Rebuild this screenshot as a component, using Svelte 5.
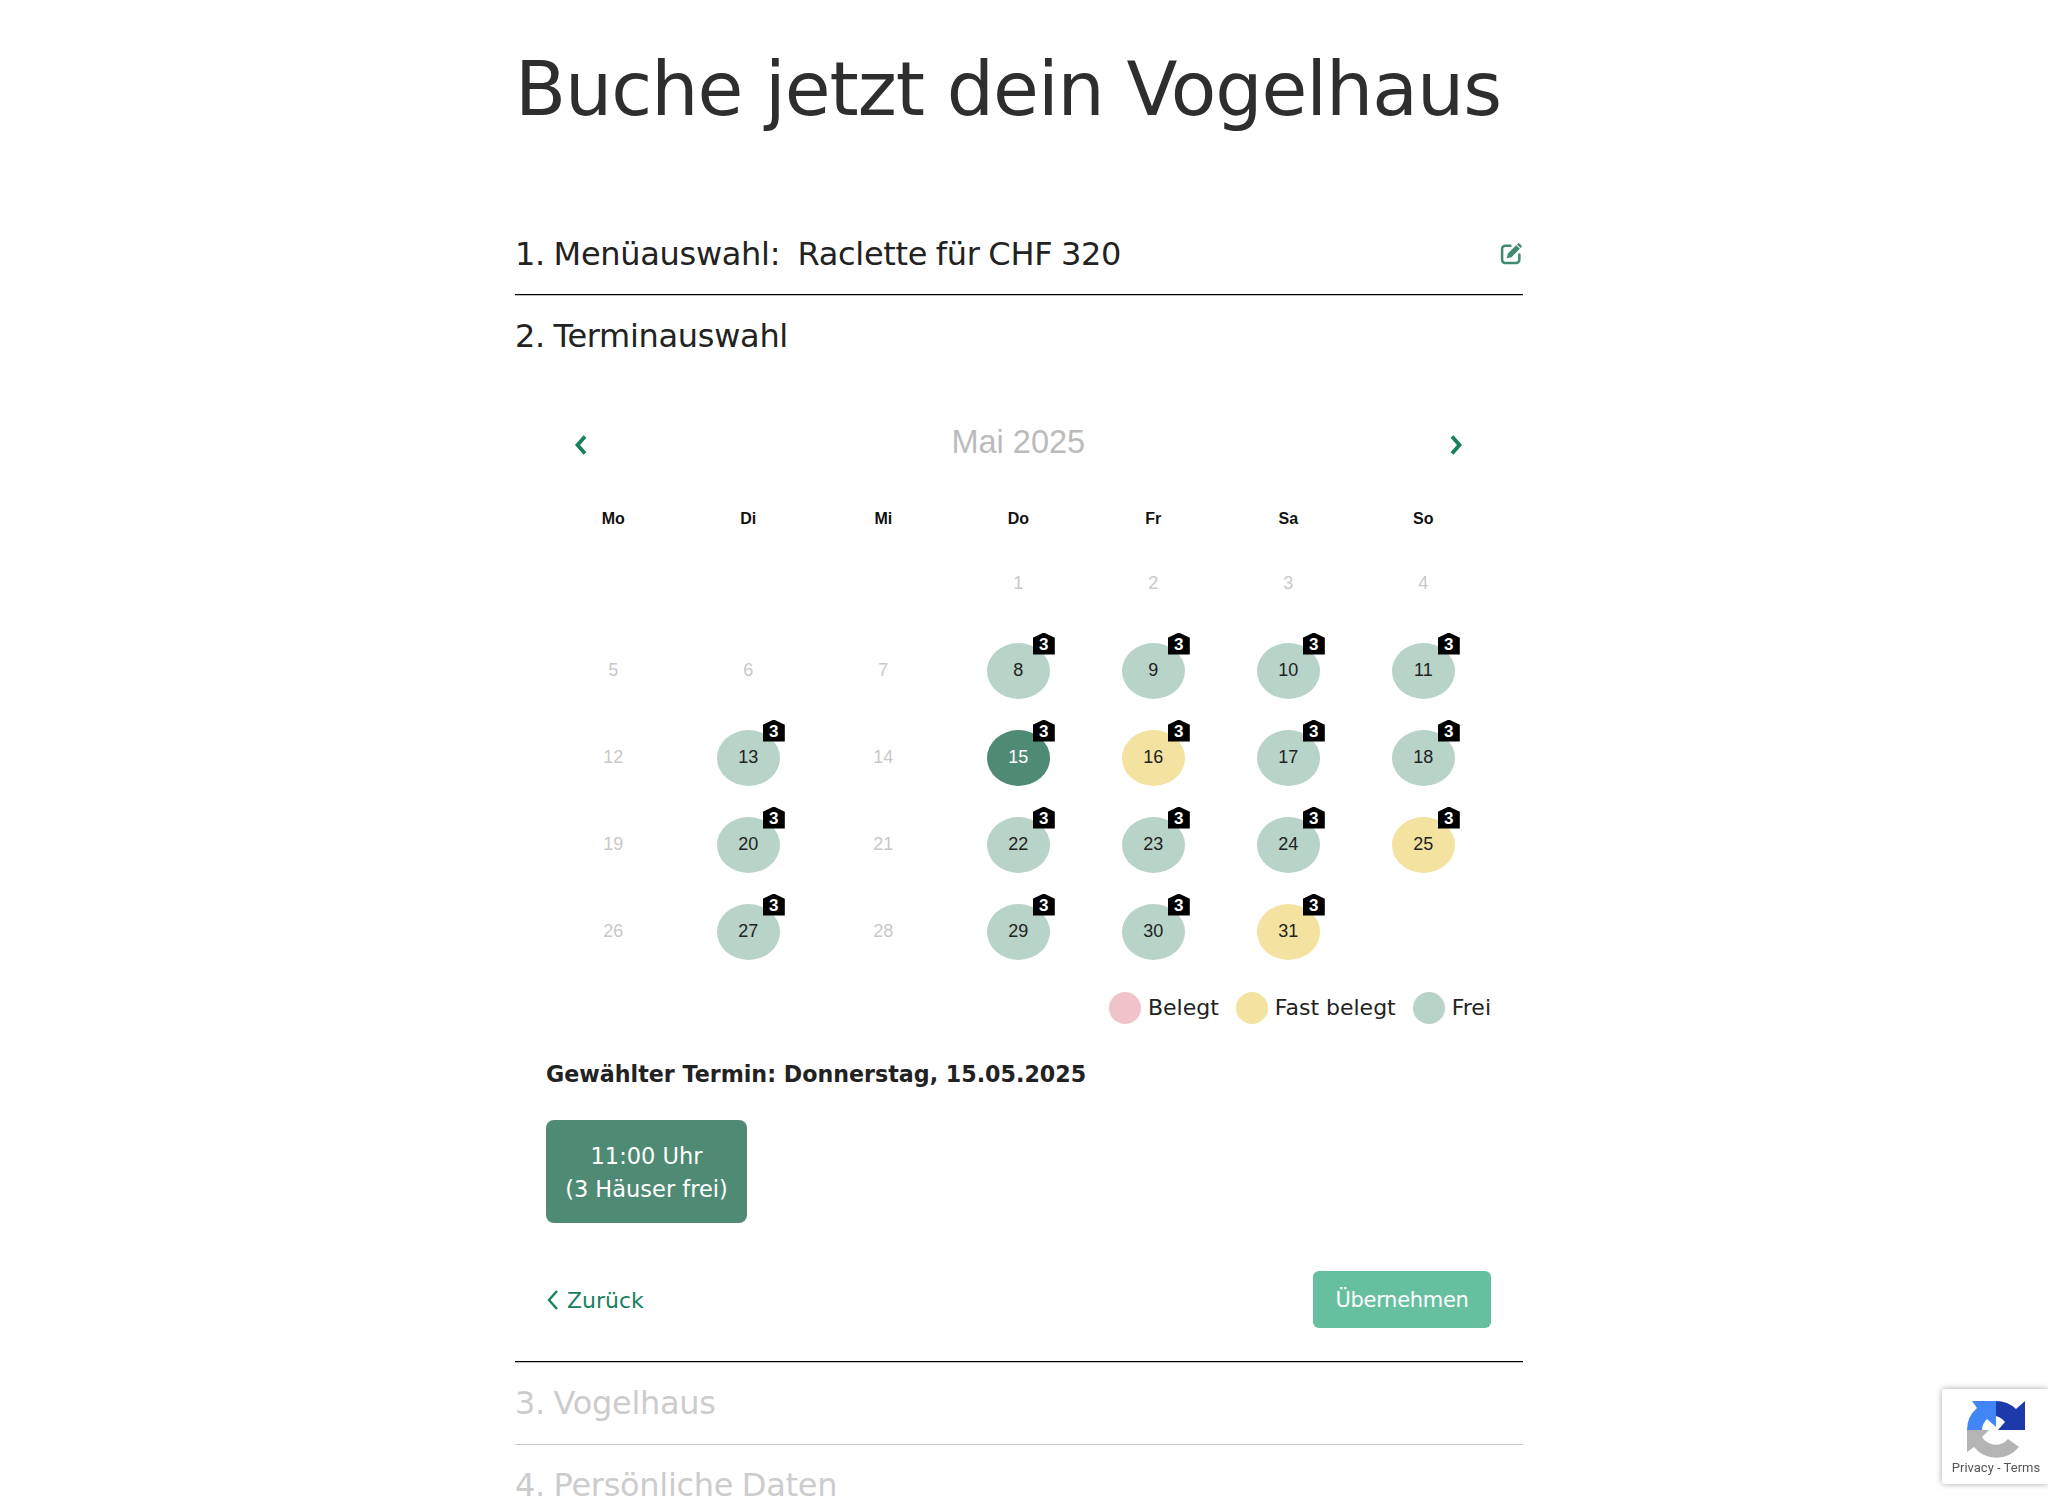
<script>
    const weekdays = ['Mo', 'Di', 'Mi', 'Do', 'Fr', 'Sa', 'So'];
    const almostFull = [16, 25, 31];
    const free = [8, 9, 10, 11, 13, 17, 18, 20, 22, 23, 24, 27, 29, 30];
    let selected = $state(15);

    // Mai 2025 starts on a Thursday
    const cells = [null, null, null];
    for (let d = 1; d <= 31; d++) cells.push(d);

    function statusOf(day) {
        if (almostFull.includes(day)) return 'almost';
        if (free.includes(day) || day === 15) return 'free';
        return 'off';
    }
</script>

<div class="page">
    <h1>Buche jetzt dein Vogelhaus</h1>

    <section class="step done">
        <h2>1. Menüauswahl:&nbsp; Raclette für CHF 320</h2>
        <button class="edit" aria-label="Bearbeiten">
            <svg viewBox="0 0 22 22" width="23" height="23">
                <path d="M10 3.500H5A3 3 0 0 0 2 6.500V17a3 3 0 0 0 3 3H15.500a3 3 0 0 0 3-3V12" fill="none" stroke="currentColor" stroke-width="2.400" stroke-linecap="round" />
                <path d="M6.500 15.500l1-4.500L15.500 3l3.500 3.500-8 8zM16.800 1.700a1.500 1.500 0 0 1 2.100 0l1.400 1.400a1.500 1.500 0 0 1 0 2.100l-.6.600-3.500-3.500z" fill="currentColor" />
            </svg>
        </button>
    </section>

    <section class="step open">
        <h2>2. Terminauswahl</h2>

        <div class="calendar">
            <div class="cal-nav">
                <button class="arrow" aria-label="Vorheriger Monat">
                    <svg viewBox="0 0 13 22" width="13" height="22"><path d="M11 2.500L3.500 11l7.500 8.500" fill="none" stroke="currentColor" stroke-width="3.800" /></svg>
                </button>
                <span class="month">Mai 2025</span>
                <button class="arrow" aria-label="Nächster Monat">
                    <svg viewBox="0 0 13 22" width="13" height="22"><path d="M2 2.500L9.500 11 2 19.500" fill="none" stroke="currentColor" stroke-width="3.800" /></svg>
                </button>
            </div>

            <div class="days">
                {#each weekdays as wd}
                    <div class="wd">{wd}</div>
                {/each}
            </div>

            <div class="grid">
                {#each cells as day}
                    <div class="cell">
                        {#if day}
                            {@const st = statusOf(day)}
                            {#if st === 'off'}
                                <span class="day off">{day}</span>
                            {:else}
                                <button class="day {st}" class:picked={selected === day} onclick={() => (selected = day)}>
                                    {day}
                                    <span class="badge">3</span>
                                </button>
                            {/if}
                        {/if}
                    </div>
                {/each}
            </div>
        </div>

        <div class="legend">
            <span class="dot pink"></span><span class="lbl">Belegt</span>
            <span class="dot yellow"></span><span class="lbl">Fast belegt</span>
            <span class="dot green"></span><span class="lbl">Frei</span>
        </div>

        <div class="pick">
            <p class="chosen">Gewählter Termin: Donnerstag, 15.05.2025</p>
            <button class="slot">11:00 Uhr<br />(3 Häuser frei)</button>
        </div>

        <div class="actions">
            <button class="back">
                <svg viewBox="0 0 14 22" width="14" height="22"><path d="M11 2L3 11l8 9" fill="none" stroke="currentColor" stroke-width="2.400" /></svg>
                <span class="back-text">Zurück</span>
            </button>
            <button class="apply">Übernehmen</button>
        </div>
    </section>

    <section class="step muted"><h2>3. Vogelhaus</h2></section>
    <section class="step muted last"><h2>4. Persönliche Daten</h2></section>
</div>

<div class="recaptcha">
    <svg viewBox="0 0 58 58" width="58" height="58">
        <path d="M0 52V30H22L15 37A16 16 0 0 0 41 39L52 47A29 29 0 0 1 7 47Z" fill="#b4b4b4" />
        <path d="M0 30A29 29 0 0 1 10 8L5 1H29V27L20 19A16 16 0 0 0 15 30Z" fill="#4285f4" />
        <path d="M29 1A29 29 0 0 1 49 9L58 1V30H31L38 22A16 16 0 0 0 29 16Z" fill="#1c3aa9" />
    </svg>
    <span>Privacy - Terms</span>
</div>

<style>
    :global(body) {
        margin: 0;
        background: #fff;
        overflow: hidden;
    }

    .page {
        width: 1008px;
        height: 1501px;
        overflow: hidden;
        margin-left: 515px;
        font-family: "DejaVu Sans", Verdana, sans-serif;
        color: #222;
    }

    button {
        font: inherit;
        border: none;
        background: none;
        padding: 0;
        cursor: pointer;
    }

    h1 {
        margin: 0;
        padding: 48px 0 102px;
        font-size: 74.500px;
        letter-spacing: -1px;
        line-height: 84px;
        font-weight: 400;
        color: #2e2e2e;
    }

    .step {
        position: relative;
        border-bottom: 1px solid #000;
        box-shadow: 0 1px 0 rgba(0, 0, 0, 0.25);
    }

    h2 {
        margin: 0;
        font-size: 32px;
        letter-spacing: -0.300px;
        word-spacing: -1.200px;
        line-height: 40px;
        font-weight: 400;
    }

    .done {
        padding-bottom: 20px;
    }

    .edit {
        position: absolute;
        right: 0;
        top: 8px;
        color: #3f8a70;
        line-height: 0;
    }

    .open {
        padding-top: 21px;
        padding-bottom: 33px;
    }

    .calendar {
        width: 945px;
        margin: 63px 0 0 30.800px;
        font-family: "Liberation Sans", Arial, sans-serif;
    }

    .cal-nav {
        display: flex;
        justify-content: space-between;
        align-items: center;
        height: 42px;
        padding: 0 28px;
    }

    .arrow {
        color: #17805f;
        line-height: 0;
        padding-top: 9px;
    }

    .month {
        font-size: 32.500px;
        color: #bbb;
        position: relative;
        top: 2px;
    }

    .days,
    .grid {
        display: grid;
        grid-template-columns: repeat(7, 135px);
        justify-items: center;
    }

    .days {
        margin-top: 49px;
    }

    .wd {
        font-size: 16px;
        font-weight: 700;
        line-height: 18px;
        color: #111;
    }

    .grid {
        grid-auto-rows: 87px;
        margin-top: 12px;
        align-items: center;
    }

    .cell {
        width: 63px;
        height: 56px;
        display: flex;
    }

    .day {
        position: relative;
        width: 63px;
        height: 56px;
        border-radius: 50%;
        display: flex;
        align-items: center;
        justify-content: center;
        font-family: "Liberation Sans", Arial, sans-serif;
        font-size: 18px;
        color: #222;
    }

    .off {
        color: #c8c8c8;
    }

    .free {
        background: #b8d3c8;
    }

    .almost {
        background: #f4e2a0;
    }

    .picked {
        background: #4f8b74;
        color: #fff;
    }

    .badge {
        position: absolute;
        left: 46px;
        top: -10px;
        width: 22px;
        height: 22px;
        background: #000;
        clip-path: polygon(50% 0, 100% 24%, 100% 100%, 0 100%, 0 24%);
        color: #fff;
        font-size: 17px;
        font-weight: 700;
        line-height: 24px;
        text-align: center;
    }

    .legend {
        display: flex;
        justify-content: flex-end;
        align-items: center;
        height: 33px;
        margin-top: 16px;
        padding-right: 32px;
        font-size: 22px;
    }

    .dot {
        width: 32px;
        height: 32px;
        border-radius: 50%;
        margin-right: 7px;
    }

    .lbl {
        margin-right: 17px;
        color: #222;
    }

    .lbl:last-child {
        margin-right: 0;
    }

    .pink {
        background: #f0c3ca;
    }

    .yellow {
        background: #f4e2a0;
    }

    .green {
        background: #b8d3c8;
    }

    .pick {
        padding-left: 31px;
    }

    .chosen {
        margin: 34px 0 0;
        font-size: 22.200px;
        line-height: 32px;
        font-weight: 700;
    }

    .slot {
        display: block;
        margin-top: 30px;
        padding-top: 2px;
        width: 201px;
        height: 103px;
        border-radius: 8px;
        background: #4f8b74;
        color: #fff;
        font-size: 22.500px;
        line-height: 33px;
    }

    .actions {
        display: flex;
        justify-content: space-between;
        align-items: center;
        margin-top: 48px;
        padding: 0 32px 0 31px;
    }

    .back {
        display: flex;
        align-items: center;
        gap: 7px;
        color: #17805f;
        font-size: 22px;
    }

    .back-text {
        padding-top: 2px;
    }

    .apply {
        width: 178px;
        height: 57px;
        border-radius: 6px;
        background: #66bf9f;
        color: #fff;
        font-size: 21px;
        letter-spacing: -0.300px;
    }

    .muted {
        padding: 21px 0 21px;
        border-bottom-color: #ccc;
        box-shadow: none;
        color: #ccc;
    }

    .muted h2 {
        color: #ccc;
    }

    .last {
        border-bottom: none;
        padding: 25px 0 0;
    }

    .last h2 {
        line-height: 30px;
    }

    .recaptcha {
        position: fixed;
        right: 0;
        top: 1389px;
        width: 106px;
        height: 95px;
        background: #fff;
        border-radius: 3px 0 0 3px;
        box-shadow: 0 0 6px rgba(0, 0, 0, 0.35);
        display: flex;
        flex-direction: column;
        align-items: center;
        padding-top: 11px;
        padding-left: 2px;
        box-sizing: border-box;
        font-family: "Roboto", sans-serif;
        font-size: 13px;
        color: #555;
    }

    .recaptcha span {
        margin-top: 2px;
        white-space: nowrap;
    }
</style>
